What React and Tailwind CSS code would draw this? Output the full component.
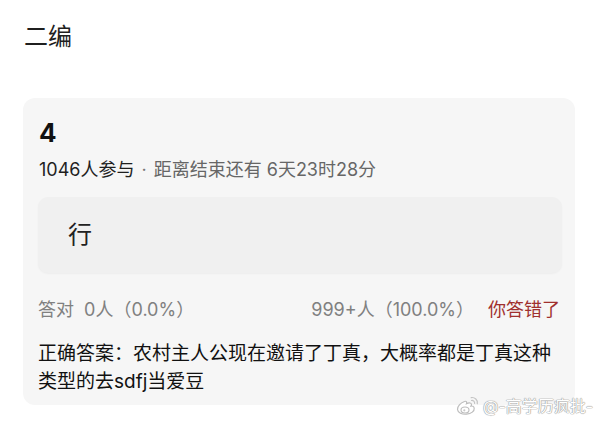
export default function App() {
  const font = { fontFamily: 'Inter, "Noto Sans CJK SC", "Noto Sans", sans-serif' };
  return (
    <div
      className="relative w-[600px] h-[425px] overflow-hidden bg-white"
      style={font}
    >
      <div className="pl-[24px] pt-[23px] h-[56px] text-[24px] leading-[28px] text-[#1f1f1f]">二编</div>
      <div className="ml-[23px] mt-[42px] w-[552px] rounded-[12px] bg-[#f6f6f6] pt-[22px] pb-[9px]">
        <div className="pl-[16px] h-[26px] text-[26px] leading-[26px] font-bold text-[#111]">4</div>
        <div className="mt-[12px] pl-[16px] h-[24px] flex items-center text-[18px] leading-[24px] whitespace-nowrap">
          <span className="text-[#1f1f1f]">1046人参与</span>
          <span className="text-[#777] mx-[7px]">·</span>
          <span className="text-[#666]">距离结束还有 6天23时28分</span>
        </div>
        <div className="mt-[15px] ml-[15px] w-[524px] h-[76px] rounded-[10px] bg-[#f0f0f0] shadow-[0_1px_2px_rgba(0,0,0,0.04)] flex items-center pl-[30px] text-[24px] text-[#222]">
          行
        </div>
        <div className="mt-[25px] mx-[15px] h-[24px] flex items-center justify-between text-[18px] leading-[24px] whitespace-nowrap">
          <span className="text-[#808080]">答对&nbsp;&nbsp;0人（0.0%）</span>
          <span className="flex items-center">
            <span className="text-[#808080]">999+人（100.0%）</span>
            <span className="ml-[14px] text-[#a0302e]">你答错了</span>
          </span>
        </div>
        <div className="mt-[18px] mx-[15px] text-[19px] leading-[28px] text-[#111]">
          正确答案：农村主人公现在邀请了丁真，大概率都是丁真这种
          <br />
          类型的去sdfj当爱豆
        </div>
      </div>
      <div className="absolute left-[455px] top-[396px] flex items-center gap-[4px]">
        <svg width="24" height="20" viewBox="0 0 24 20" fill="none">
          <path
            d="M9.5 5.5C5.5 7 2.2 10.3 2.5 13.5C2.8 16.8 7 18.6 11.5 18.2C16.5 17.8 19.5 15 19.2 12.3C19 10.3 17 9.8 16 10.1C16.8 8.6 16.6 7.2 15 7C13.5 6.8 11.5 7.8 11.5 7.8C12 6.3 11.6 4.6 9.5 5.5Z"
            fill="#fff"
            stroke="#bdbdbd"
            strokeWidth="1.2"
          />
          <ellipse cx="10" cy="14" rx="4" ry="3" fill="#fff" stroke="#bdbdbd" strokeWidth="1.1" />
          <circle cx="9.3" cy="14.3" r="1.1" fill="#c8c8c8" />
          <path d="M16.5 4.5C18.2 4.2 19.8 5.6 19.6 7.4" stroke="#c4c4c4" strokeWidth="1.2" strokeLinecap="round" />
          <path d="M16.2 1.6C19.8 1 22.9 4 22.3 7.6" stroke="#c4c4c4" strokeWidth="1.2" strokeLinecap="round" />
        </svg>
        <span className="text-[16px] leading-[20px] text-white [text-shadow:0_0_1px_#9a9a9a,0_0_1px_#9a9a9a,0_0_1px_#9a9a9a]">
          @-高学历疯批-
        </span>
      </div>
    </div>
  );
}
